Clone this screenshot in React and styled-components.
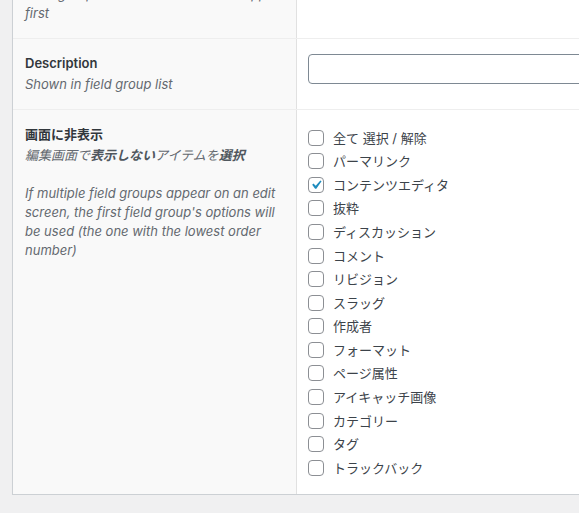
import React from 'react';
import styled, { createGlobalStyle } from 'styled-components';

const GlobalStyle = createGlobalStyle`
  html, body {
    margin: 0;
    padding: 0;
    overflow: hidden;
    background: #f0f0f1;
  }
  body {
    font-family: Inter, "Noto Sans CJK JP", sans-serif;
    font-size: 13px;
    color: #3c434a;
  }
`;

const Page = styled.div`
  padding: 0 0 0 12px;
`;

const Box = styled.div`
  width: 720px;
  margin-top: -52px;
  background: #fff;
  border: 1px solid #ccd0d4;
  box-shadow: 0 1px 1px rgba(0, 0, 0, 0.04);
`;

const Row = styled.div`
  display: grid;
  grid-template-columns: 284px 1fr;
  border-top: ${({ first }) => (first ? 'none' : '1px solid #eeeeee')};
`;

const LabelCell = styled.div`
  background: #f9f9f9;
  border-right: 1px solid #e1e1e1;
  padding: 15px 12px;
`;

const Label = styled.div`
  font-weight: 600;
  color: #32373c;
  line-height: 18px;
  margin-bottom: 3px;
`;

const Description = styled.p`
  margin: 0;
  font-style: italic;
  color: #646970;
  line-height: 19px;
  white-space: ${({ nowrap }) => (nowrap ? 'nowrap' : 'normal')};

  b {
    font-weight: 700;
    color: #50575e;
  }
`;

const InputCell = styled.div`
  padding: 15px 11px;
`;

const TextInput = styled.input`
  display: block;
  box-sizing: border-box;
  width: 100%;
  height: 30px;
  margin: 0;
  padding: 0 8px;
  border: 1px solid #7e8993;
  border-radius: 4px;
  background: #fff;
  font: inherit;
`;

const CheckList = styled.ul`
  list-style: none;
  margin: 1px 0 0;
  padding: 0;
`;

const CheckItem = styled.li`
  height: 23.57px;
  display: flex;
  align-items: center;
`;

const CheckLabel = styled.label`
  display: flex;
  align-items: center;
  gap: 9px;
  color: #3c434a;
  line-height: 18px;
`;

const Box16 = styled.span`
  box-sizing: border-box;
  width: 16px;
  height: 16px;
  border: 1px solid #8c8f94;
  border-radius: 4px;
  background: #fff;
  display: flex;
  align-items: center;
  justify-content: center;
  flex: none;
`;

const Check = () => (
  <svg width="20" height="20" viewBox="0 0 20 20" style={{ margin: '-2px' }}>
    <path d="M14.83 4.89l1.34.94-5.81 8.38H9.02L5.78 9.67l1.34-1.25 2.57 2.4z" fill="#1e8cbe" />
  </svg>
);

const items = [
  { text: '全て 選択 / 解除' },
  { text: 'パーマリンク' },
  { text: 'コンテンツエディタ', checked: true },
  { text: '抜粋' },
  { text: 'ディスカッション' },
  { text: 'コメント' },
  { text: 'リビジョン' },
  { text: 'スラッグ' },
  { text: '作成者' },
  { text: 'フォーマット' },
  { text: 'ページ属性' },
  { text: 'アイキャッチ画像' },
  { text: 'カテゴリー' },
  { text: 'タグ' },
  { text: 'トラックバック' },
];

export default function App() {
  return (
    <>
      <GlobalStyle />
      <Page>
        <Box>
          <Row first>
            <LabelCell>
              <Label>Order No.</Label>
              <Description nowrap>
                Field groups with a lower order will appear
                <br />
                first
              </Description>
            </LabelCell>
            <InputCell>
              <TextInput type="number" defaultValue="" />
            </InputCell>
          </Row>
          <Row>
            <LabelCell>
              <Label>Description</Label>
              <Description>Shown in field group list</Description>
            </LabelCell>
            <InputCell>
              <TextInput type="text" />
            </InputCell>
          </Row>
          <Row>
            <LabelCell>
              <Label>画面に非表示</Label>
              <Description>
                編集画面で<b>表示しない</b>アイテムを<b>選択</b>
                <br />
                <br />
                If multiple field groups appear on an edit screen, the first field group's options will be used (the one with the lowest order number)
              </Description>
            </LabelCell>
            <InputCell>
              <CheckList>
                {items.map((item) => (
                  <CheckItem key={item.text}>
                    <CheckLabel>
                      <Box16>{item.checked && <Check />}</Box16>
                      {item.text}
                    </CheckLabel>
                  </CheckItem>
                ))}
              </CheckList>
            </InputCell>
          </Row>
        </Box>
      </Page>
    </>
  );
}
